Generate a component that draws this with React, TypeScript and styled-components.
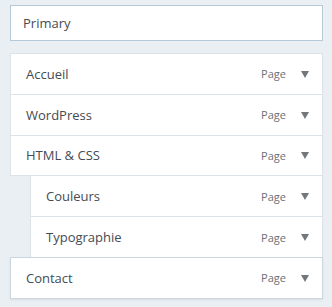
import styled, { createGlobalStyle } from 'styled-components';

const menuItems = [
  { title: 'Accueil', depth: 0 },
  { title: 'WordPress', depth: 0 },
  { title: 'HTML & CSS', depth: 0 },
  { title: 'Couleurs', depth: 1 },
  { title: 'Typographie', depth: 1 },
  { title: 'Contact', depth: 0, active: true },
];

const GlobalStyle = createGlobalStyle`
  html, body {
    margin: 0;
    padding: 0;
    background: #eaeff3;
  }

  body {
    font-family: 'Open Sans', 'Noto Sans', sans-serif;
    color: #32373c;
  }
`;

export default function App() {
  return (
    <>
      <GlobalStyle />
      <Panel>
        <MenuName type="text" defaultValue="Primary" />
        <MenuList>
          {menuItems.map((item) => (
            <MenuItem key={item.title} depth={item.depth} active={item.active}>
              <ItemTitle>{item.title}</ItemTitle>
              <ItemControls>
                <ItemType>Page</ItemType>
                <Arrow />
              </ItemControls>
            </MenuItem>
          ))}
        </MenuList>
      </Panel>
    </>
  );
}

const Panel = styled.div`
  width: 332px;
  height: 307px;
  box-sizing: border-box;
  padding: 5px 9px 0 10px;
  display: flex;
  flex-direction: column;
  gap: 12px;
`;

const MenuName = styled.input`
  box-sizing: border-box;
  width: 100%;
  height: 36px;
  margin: 0;
  padding: 0 12px;
  border: 1px solid #b6c9d8;
  background: #fff;
  font-family: inherit;
  font-size: 13px;
  color: #444b52;
  outline: none;
`;

const MenuList = styled.ul`
  list-style: none;
  margin: 0;
  padding: 0;
  display: flex;
  flex-direction: column;
`;

const MenuItem = styled.li<{ depth: number; active?: boolean }>`
  box-sizing: border-box;
  height: 41.8px;
  margin: 0 0 -1px ${({ depth }) => depth * 20}px;
  padding: 0 13px 0 15px;
  display: flex;
  align-items: center;
  justify-content: space-between;
  background: #fff;
  border: 1px solid ${({ active }) => (active ? '#ccd6de' : '#dce3e8')};
  box-shadow: ${({ active }) => (active ? '0 1px 2px rgba(0, 0, 0, 0.07)' : 'none')};
  position: relative;
`;

const ItemTitle = styled.span`
  font-size: 13px;
  color: #444b52;
`;

const ItemControls = styled.div`
  display: flex;
  align-items: center;
  gap: 15px;
`;

const ItemType = styled.span`
  font-size: 11px;
  color: #6b7075;
`;

const Arrow = styled.span`
  width: 0;
  height: 0;
  border-left: 4px solid transparent;
  border-right: 4px solid transparent;
  border-top: 7px solid #72777c;
  margin-top: 1px;
`;
